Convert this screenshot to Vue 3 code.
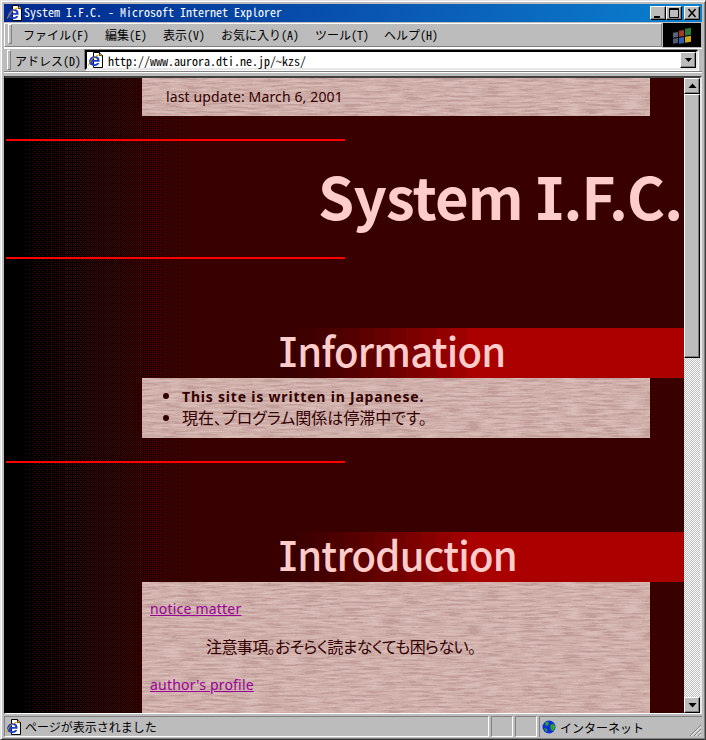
<script setup>
const stops = []
const n = 12
const start = 293
const step = 15.4
for (let i = 0; i < n; i++) {
  const t = Math.pow((i + 1) / n, 1.3)
  stops.push(`rgba(170,0,0,${t.toFixed(3)}) ${start + i * step}px ${start + (i + 1) * step}px`)
}
const bandStyle = {
  backgroundImage: `linear-gradient(90deg, rgba(170,0,0,0) ${start}px, ${stops.join(', ')}, #aa0000 ${start + n * step}px)`
}
const menus = ['ファイル(F)', '編集(E)', '表示(V)', 'お気に入り(A)', 'ツール(T)', 'ヘルプ(H)']

const bayer = [[0, 8, 2, 10], [12, 4, 14, 6], [3, 11, 1, 9], [15, 7, 13, 5]]
const strips = []
const firstX = 17
const lastX = 183
const levels = 15
for (let l = 0; l < levels; l++) {
  const level = levels - l
  const dots = []
  for (let y = 0; y < 4; y++) {
    for (let x = 0; x < 4; x++) {
      if (bayer[y][x] < level) dots.push({ x, y })
    }
  }
  const w = (lastX - firstX) / levels
  const r = Math.round(80 - (80 - 57) * (l / (levels - 1)))
  strips.push({ id: `d${level}`, x: Math.round(firstX + l * w), w: Math.ceil(w), dots, base: `rgb(${r},0,0)` })
}
</script>

<template>
  <div class="window">
    <svg class="defs" width="0" height="0" aria-hidden="true">
      <filter id="wood" x="0" y="0" width="100%" height="100%" color-interpolation-filters="sRGB">
        <feTurbulence type="fractalNoise" baseFrequency="0.05 0.45" numOctaves="2" seed="11" />
        <feColorMatrix type="matrix" values="0 0 0 0 0  0 0 0 0 0  0 0 0 0 0  1.8 0 0 0 -0.4" result="n" />
        <feComponentTransfer in="n" result="d">
          <feFuncA type="discrete" tableValues="0 .45 .7 1" />
        </feComponentTransfer>
        <feFlood flood-color="#d9bcb8" result="lite" />
        <feFlood flood-color="#c29e9a" result="dark" />
        <feComposite in="lite" in2="d" operator="in" result="top" />
        <feMerge>
          <feMergeNode in="dark" />
          <feMergeNode in="top" />
        </feMerge>
      </filter>
      <symbol id="ie" viewBox="0 0 16 16">
        <path d="M5.500 .5h6l3 3v12h-9z" fill="#fff" stroke="#000" />
        <path d="M11.500 .5v3h3" fill="#c0c0c0" stroke="#000" />
        <path d="M1 10.500c0-3.600 2.600-6.400 6-6.400 2.800 0 4.600 2 4.600 4.800v.9H4.500c.1 1.600 1.100 2.400 2.500 2.400 1 0 1.700-.4 2.200-1.100h2.100c-.8 1.900-2.400 2.900-4.400 2.900-3.400 0-5.900-1.500-5.900-4.500zM4.600 8.100h4.700c-.1-1.300-1-2.100-2.300-2.100-1.200 0-2.100.8-2.400 2.100z" fill="#1c3fc4" />
        <path d="M.5 13.500c1-4 5-9 10-10.500 2-.5 3.500 0 3 1.500" fill="none" stroke="#e0a000" />
      </symbol>
    </svg>

    <div class="titlebar">
      <svg class="title-icon" width="16" height="16"><use href="#ie" /></svg>
      <span class="title-text">System I.F.C. - Microsoft Internet Explorer</span>
      <div class="winbtns">
        <button class="winbtn"><svg width="14" height="12"><rect x="3" y="9" width="6" height="2" fill="#000" /></svg></button>
        <button class="winbtn"><svg width="14" height="12"><path d="M2.500 1.500h9v9h-9z M2 2.500h10" fill="none" stroke="#000" /></svg></button>
        <button class="winbtn close"><svg width="14" height="12"><path d="M3.500 2l7 8M10.500 2l-7 8" stroke="#000" stroke-width="1.500" fill="none" /></svg></button>
      </div>
    </div>

    <div class="menurow">
      <div class="bar menubar">
        <i class="grip"></i>
        <span v-for="m in menus" :key="m" class="menuitem">{{ m }}</span>
      </div>
      <div class="throbber">
        <svg width="22" height="18" viewBox="0 0 22 18">
          <g transform="skewY(-9) translate(0 3)">
            <rect x="2" y="4" width="5" height="5" fill="#55667a" />
            <rect x="8" y="3" width="5" height="6" fill="#a83a24" />
            <rect x="14" y="2" width="6" height="7" fill="#2c7a34" />
            <rect x="2" y="10" width="5" height="5" fill="#4a5c72" />
            <rect x="8" y="10" width="5" height="6" fill="#2c5fb0" />
            <rect x="14" y="10" width="6" height="6" fill="#d0a418" />
          </g>
        </svg>
      </div>
    </div>

    <div class="bar addressbar">
      <i class="grip"></i>
      <span class="addr-label">アドレス(D)</span>
      <div class="addr-input">
        <svg class="addr-icon" width="16" height="16"><use href="#ie" /></svg>
        <span class="addr-url">http://www.aurora.dti.ne.jp/~kzs/</span>
        <button class="combo"><svg width="9" height="6"><path d="M1 1h7L4.500 5z" fill="#000" /></svg></button>
      </div>
    </div>

    <div class="viewport">
      <div class="page">
        <svg class="dither" width="183" height="640" aria-hidden="true" shape-rendering="crispEdges">
          <defs>
            <pattern v-for="s in strips" :id="s.id" :key="s.id" width="4" height="4" patternUnits="userSpaceOnUse">
              <rect v-for="d in s.dots" :key="d.x + '-' + d.y" :x="d.x" :y="d.y" width="1" height="1" fill="#000" />
            </pattern>
          </defs>
          <rect x="0" y="0" width="17" height="640" fill="#000" />
          <g v-for="s in strips" :key="s.id">
            <rect :x="s.x" y="0" :width="s.w" height="640" :fill="s.base" />
            <rect :x="s.x" y="0" :width="s.w" height="640" :fill="`url(#${s.id})`" />
          </g>
        </svg>
        <div class="panel first"><div class="wood"></div><p class="update">last update: March 6, 2001</p></div>
        <hr class="rule top-rule" />
        <h1 class="site-title">System <span class="hw">I</span>.F.C.</h1>
        <hr class="rule" />
        <h2 class="band" :style="bandStyle"><span class="hw">I</span>nformation</h2>
        <div class="panel info">
          <div class="wood"></div>
          <ul>
            <li><b>This site is written in Japanese.</b></li>
            <li>現在、プログラム関係は停滞中です。</li>
          </ul>
        </div>
        <hr class="rule after-info" />
        <h2 class="band second" :style="bandStyle"><span class="hw">I</span>ntroduction</h2>
        <div class="panel intro">
          <div class="wood"></div>
          <dl>
            <dt><a>notice matter</a></dt>
            <dd>注意事項。おそらく読まなくても困らない。</dd>
            <dt><a>author's profile</a></dt>
          </dl>
        </div>
      </div>
      <div class="scrollbar">
        <button class="sb-btn"><svg width="9" height="6"><path d="M4.500 0.500L8.500 5h-8z" fill="#000" /></svg></button>
        <div class="sb-thumb"></div>
        <div class="sb-track"></div>
        <button class="sb-btn"><svg width="9" height="6"><path d="M.5 1h8l-4 4.500z" fill="#000" /></svg></button>
      </div>
    </div>

    <div class="statusbar">
      <div class="st main">
        <svg width="16" height="16"><use href="#ie" /></svg>
        <span>ページが表示されました</span>
      </div>
      <div class="st small"></div>
      <div class="st small"></div>
      <div class="st zone">
        <svg width="14" height="14" viewBox="0 0 14 14">
          <circle cx="7" cy="7" r="6.500" fill="#0a2fd8" />
          <path d="M3 2.500l3-1 1 2-1.500 2.500-2-.5zM8 5l4-1 1.500 3-2 4-2.500-1zM2 8l3 1 .5 3-2-1z" fill="#35a030" />
        </svg>
        <span>インターネット</span>
        <svg class="grip-corner" width="13" height="13"><path d="M12 1L1 12M12 5L5 12M12 9L9 12" stroke="#808080" fill="none" /><path d="M12 2.500L2.500 12M12 6.500L6.500 12M12 10.500L10.500 12" stroke="#fff" fill="none" /></svg>
      </div>
    </div>
  </div>
</template>

<style scoped>
.window {
  width: 706px;
  height: 740px;
  box-sizing: border-box;
  padding: 3px 3px 2px;
  background: #bcbcbc;
  border: 1px solid;
  border-color: #e4e4e4 #404040 #303030 #e4e4e4;
  box-shadow: inset 1px 1px 0 #fff, inset -1px -1px 0 #808080;
  display: flex;
  flex-direction: column;
  font-family: "Noto Sans CJK JP", sans-serif;
  font-feature-settings: "hwid";
  font-size: 12px;
  color: #000;
  overflow: hidden;
}
.defs { position: absolute; }
.titlebar {
  height: 18px;
  flex: none;
  display: flex;
  align-items: center;
  background: linear-gradient(90deg, #00288e 0%, #0a5cb4 60%, #0a80cf 100%);
  color: #fff;
  padding-left: 3px;
}
.title-icon { flex: none; }
.title-text { margin-left: 1px; font-size: 12px; line-height: 16px; margin-bottom: 2px; white-space: nowrap; }
.winbtns { margin-left: auto; display: flex; margin-right: 2px; }
.winbtn, .combo, .sb-btn {
  padding: 0;
  background: #bcbcbc;
  border: 1px solid;
  border-color: #fff #000 #000 #fff;
  box-shadow: inset -1px -1px 0 #808080;
  display: flex;
  align-items: center;
  justify-content: center;
}
.winbtn { width: 16px; height: 14px; }
.close { margin-left: 2px; }
.menurow {
  flex: none;
  display: flex;
  height: 24px;
  margin-top: 1px;
}
.bar {
  display: flex;
  align-items: center;
  box-sizing: border-box;
  border-top: 1px solid #fff;
  border-bottom: 1px solid #808080;
  box-shadow: 0 1px 0 #fff;
}
.menubar { flex: 1; border-left: 1px solid #fff; padding: 0 0 2px 3px; border-right: 1px solid #808080; }
.grip {
  display: block;
  width: 2px;
  height: 18px;
  background: #bcbcbc;
  border: 1px solid;
  border-color: #fff #808080 #808080 #fff;
  flex: none;
}
.menuitem { white-space: nowrap; font-size: 12px; padding: 0 8px; color: #000; }
.menuitem:first-of-type { margin-left: 3px; }
.menuitem:last-of-type { margin-left: -1px; }
.throbber {
  width: 38px;
  flex: none;
  background: #000;
  margin: 0 1px;
  display: flex;
  align-items: center;
  justify-content: center;
}
.addressbar {
  flex: none;
  height: 24px;
  margin-top: 1px;
  padding-left: 3px;
  padding-right: 4px;
}
.addr-label { margin-left: 4px; white-space: nowrap; font-size: 12px; }
.addr-input {
  flex: 1;
  height: 20px;
  box-sizing: border-box;
  margin-left: 4px;
  background: #fff;
  border: 2px solid;
  border-color: #000 #e8e8e8 #e8e8e8 #000;
  box-shadow: -1px -1px 0 #808080, 1px 1px 0 #fff;
  display: flex;
  align-items: center;
  padding-left: 1px;
}
.addr-icon { flex: none; }
.addr-url { margin-left: 4px; white-space: nowrap; font-size: 12px; }
.combo { margin-left: auto; width: 16px; height: 16px; }
.viewport {
  flex: 1;
  min-height: 0;
  margin-top: 4px;
  display: flex;
  border-top: 2px solid #404040;
  border-left: 1px solid #000;
  border-right: 2px solid #e8e8e8;
  border-bottom: 1px solid #fff;
}
.page {
  position: relative;
  flex: 1;
  min-width: 0;
  overflow: hidden;
  background: #390000;
  color: #330000;
  font-family: "Noto Sans CJK JP", sans-serif;
  font-feature-settings: "palt";
  font-size: 15px;
}
.dither { position: absolute; left: 0; top: 0; display: block; }
.page > :not(.dither) { position: relative; }
.panel {
  margin-left: 137px;
  width: 508px;
  overflow: hidden;
}
.wood { position: absolute; inset: 0; filter: url(#wood); }
.panel > :not(.wood) { position: relative; }
.first { height: 38px; }
.update {
  margin: 0;
  padding: 9px 0 0 24px;
  line-height: 20px;
  font-family: "Noto Sans", sans-serif;
  font-size: 14px;
  letter-spacing: 0.13px;
}
.rule {
  height: 2px;
  width: 339px;
  margin: 24px 0 0 1px;
  border: 0;
  background: #ff0000;
}
.top-rule { margin-top: 23px; }
.hw { font-feature-settings: "hwid"; }
.site-title {
  margin: 0;
  height: 92px;
  box-sizing: border-box;
  padding-left: 313px;
  font-size: 58px;
  line-height: 108px;
  font-weight: 700;
  color: #ffcccc;
  white-space: nowrap;
  letter-spacing: -0.8px;
}
.band {
  margin: 69px 0 0;
  height: 50px;
  box-sizing: border-box;
  padding-left: 273px;
  font-size: 40px;
  line-height: 44px;
  font-weight: 500;
  color: #ffcccc;
  white-space: nowrap;
  letter-spacing: -0.8px;
}
.second { margin-top: 69px; }
.info { height: 60px; }
ul { margin: 0; padding: 7px 0 0 40px; list-style: disc; }
li { line-height: 21px; font-size: 16px; }
li b { font-family: "Noto Sans", sans-serif; font-size: 14px; font-weight: 700; letter-spacing: 0.8px; }
.after-info { margin-top: 23px; }
.intro { height: 132px; }
dl { margin: 0; padding: 16px 0 0 8px; }
dt { line-height: 22px; font-family: "Noto Sans", sans-serif; font-size: 14px; }
dt a { color: #990099; text-decoration: underline; letter-spacing: 0.2px; }
dd { margin: 15px 0 17px 56px; line-height: 22px; font-size: 16px; letter-spacing: -0.6px; }
.scrollbar {
  width: 16px;
  flex: none;
  display: flex;
  flex-direction: column;
  background: repeating-conic-gradient(#bcbcbc 0 25%, #fff 0 50%) 0 0 / 2px 2px;
}
.sb-btn { width: 16px; height: 16px; flex: none; }
.sb-thumb {
  height: 264px;
  flex: none;
  box-sizing: border-box;
  background: #bcbcbc;
  border: 1px solid;
  border-color: #fff #000 #000 #fff;
  box-shadow: inset -1px -1px 0 #808080;
}
.sb-track { flex: 1; }
.statusbar {
  flex: none;
  height: 21px;
  display: flex;
  margin-top: 2px;
  gap: 2px;
  font-size: 12px;
}
.st {
  border: 1px solid;
  border-color: #808080 #fff #fff #808080;
  display: flex;
  align-items: center;
  box-sizing: border-box;
  white-space: nowrap;
}
.main { flex: 1; gap: 3px; padding-left: 1px; }
.small { width: 22px; }
.zone { width: 163px; position: relative; gap: 4px; padding-left: 2px; border-right: 0; border-bottom: 0; }
.grip-corner { position: absolute; right: 0; bottom: 0; }
</style>
